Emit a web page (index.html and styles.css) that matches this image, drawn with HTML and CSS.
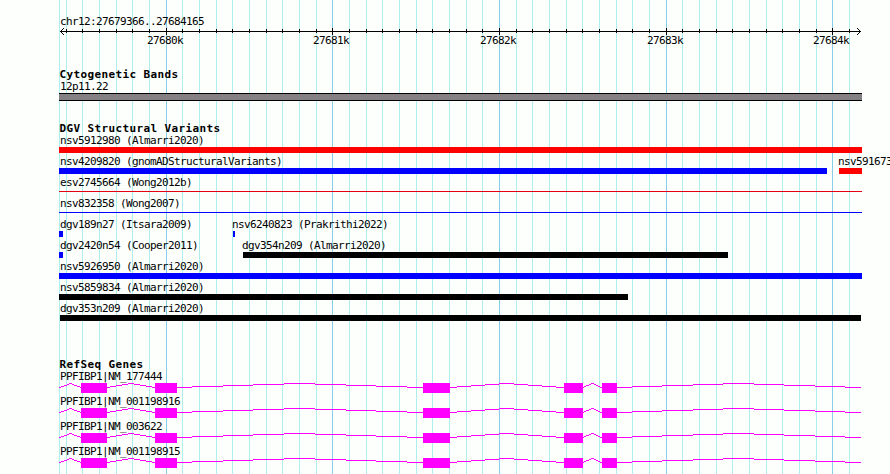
FILE: index.html
```html
<!doctype html>
<html lang="en">
  <head>
    <meta charset="utf-8">
    <meta name="viewport" content="width=device-width, initial-scale=1.0">
    <title>chr12:27679366..27684165</title>
    <link rel="stylesheet" href="styles.css">
  </head>
  <body>
    <main class="browser">

      <header>
        <div class="label">chr12:27679366..27684165</div>
        <svg class="ruler" width="803" height="41" shape-rendering="crispEdges">
          <defs>
            <!-- 300bp = 50px, so three ticks per tile -->
            <pattern id="ticks" x="7" y="2" width="50" height="4" patternUnits="userSpaceOnUse">
              <path d="M0 0h1v4h-1zM16 0h1v4h-1zM33 0h1v4h-1z"/>
            </pattern>
          </defs>
          <rect x="1" y="4" width="801" height="1"/>
          <rect x="7" y="2" width="784" height="4" fill="url(#ticks)"/>
          <path d="M107 1h1v7h-1zM273 1h1v7h-1zM440 1h1v7h-1zM607 1h1v7h-1zM773 1h1v7h-1z"/>
          <path d="M2 3h1v3h-1zM3 2h1v1h-1zM3 6h1v1h-1zM4 1h1v1h-1zM4 7h1v1h-1z"/>
          <path d="M800 3h1v3h-1zM799 2h1v1h-1zM799 6h1v1h-1zM798 1h1v1h-1zM798 7h1v1h-1z"/>
          <g class="ruler-text">
            <text x="106" y="17">27680k</text>
            <text x="272" y="17">27681k</text>
            <text x="439" y="17">27682k</text>
            <text x="606" y="17">27683k</text>
            <text x="772" y="17">27684k</text>
          </g>
        </svg>
      </header>

      <section class="track cytoband">
        <h2>Cytogenetic Bands</h2>
        <div class="label">12p11.22</div>
        <div class="band"></div>
      </section>

      <section class="track variants">
        <h2>DGV Structural Variants</h2>
        <div class="row">
          <div class="variant red" style="width: 803px">
            <div class="label">nsv5912980 (Almarri2020)</div>
            <div class="bar"></div>
          </div>
        </div>
        <div class="row">
          <div class="variant blue" style="width: 768px">
            <div class="label">nsv4209820 (gnomADStructuralVariants)</div>
            <div class="bar"></div>
          </div>
          <div class="variant red inside" style="width: 23px; margin-left: 12px">
            <div class="label">nsv591673</div>
            <div class="bar"></div>
          </div>
        </div>
        <div class="row">
          <div class="variant red" style="width: 803px">
            <div class="label">esv2745664 (Wong2012b)</div>
            <div class="bar thin"></div>
          </div>
        </div>
        <div class="row">
          <div class="variant blue" style="width: 803px">
            <div class="label">nsv832358 (Wong2007)</div>
            <div class="bar thin"></div>
          </div>
        </div>
        <div class="row">
          <div class="variant blue" style="width: 4px">
            <div class="label">dgv189n27 (Itsara2009)</div>
            <div class="bar"></div>
          </div>
          <div class="variant blue inside" style="width: 2px; margin-left: 170px">
            <div class="label">nsv6240823 (Prakrithi2022)</div>
            <div class="bar"></div>
          </div>
        </div>
        <div class="row">
          <div class="variant blue" style="width: 4px">
            <div class="label">dgv2420n54 (Cooper2011)</div>
            <div class="bar"></div>
          </div>
          <div class="variant inside" style="width: 485px; margin-left: 180px">
            <div class="label">dgv354n209 (Almarri2020)</div>
            <div class="bar"></div>
          </div>
        </div>
        <div class="row">
          <div class="variant blue" style="width: 803px">
            <div class="label">nsv5926950 (Almarri2020)</div>
            <div class="bar"></div>
          </div>
        </div>
        <div class="row">
          <div class="variant" style="width: 569px">
            <div class="label">nsv5859834 (Almarri2020)</div>
            <div class="bar"></div>
          </div>
        </div>
        <div class="row">
          <div class="variant inside-edge" style="width: 801px; margin-left: 1px">
            <div class="label">dgv353n209 (Almarri2020)</div>
            <div class="bar"></div>
          </div>
        </div>
      </section>

      <section class="track genes">
        <h2>RefSeq Genes</h2>
        <div class="gene">
          <div class="label">PPFIBP1|NM_177444</div>
          <svg width="803" height="10" shape-rendering="crispEdges">
            <!-- exons and introns, all the transcripts share these -->
            <g id="transcript">
              <path class="intron" d="M0 4.5h2m0-1h3m0-1h3m0-1h2m0-1h3m0 1h2m0 1h3m0 1h3m0 1h1"/>
              <path class="intron" d="M48 4.5h3m0-1h6m0-1h6m0-1h6m0-1h6m0 1h6m0 1h6m0 1h6m0 1h3"/>
              <path class="intron" d="M118 4.5h15m0-1h31m0-1h30m0-1h31m0-1h31m0 1h31m0 1h30m0 1h31m0 1h16"/>
              <path class="intron" d="M391 4.5h7m0-1h14m0-1h14m0-1h14m0-1h15m0 1h14m0 1h14m0 1h14m0 1h8"/>
              <path class="intron" d="M524 4.5h1m0-1h2m0-1h3m0-1h2m0-1h3m0 1h2m0 1h2m0 1h2m0 1h2"/>
              <path class="intron" d="M558 4.5h15m0-1h30m0-1h31m0-1h30m0-1h31m0 1h30m0 1h31m0 1h30m0 1h16"/>
              <path class="exon" d="M22 0h26v10h-26zM96 0h22v10h-22zM364 0h27v10h-27zM505 0h19v10h-19zM543 0h15v10h-15z"/>
            </g>
          </svg>
        </div>
        <div class="gene">
          <div class="label">PPFIBP1|NM_001198916</div>
          <svg width="803" height="10" shape-rendering="crispEdges"><use href="#transcript"/></svg>
        </div>
        <div class="gene">
          <div class="label">PPFIBP1|NM_003622</div>
          <svg width="803" height="10" shape-rendering="crispEdges"><use href="#transcript"/></svg>
        </div>
        <div class="gene">
          <div class="label">PPFIBP1|NM_001198915</div>
          <svg width="803" height="10" shape-rendering="crispEdges"><use href="#transcript"/></svg>
        </div>
      </section>

    </main>
  </body>
</html>
```
FILE: styles.css
```css
body {
  margin: 0;
  background-color: #fdfffc;
  color: black;
  font-family: "DejaVu Sans Mono", monospace;
  font-size: 11px;
  line-height: 14px;
  letter-spacing: -0.62px;
  overflow: hidden;
}

svg {
  display: block;
}

/* vertical grid lines: major ones first, then the minor ones */
.browser {
  box-sizing: border-box;
  width: 803px;
  height: 474px;
  margin-left: 59px;
  padding-top: 15px;
  background-image:
    linear-gradient(#87ceeb, #87ceeb),
    linear-gradient(#87ceeb, #87ceeb),
    linear-gradient(#87ceeb, #87ceeb),
    linear-gradient(#87ceeb, #87ceeb),
    linear-gradient(#87ceeb, #87ceeb),
    linear-gradient(#afeeee, #afeeee),
    linear-gradient(to right, #afeeee 1px, transparent 1px, transparent 16px, #afeeee 16px, #afeeee 17px, transparent 17px, transparent 33px, #afeeee 33px, #afeeee 34px, transparent 34px);
  background-size: 1px 100%, 1px 100%, 1px 100%, 1px 100%, 1px 100%, 1px 100%, 50px 100%;
  background-position: 107px 0, 273px 0, 440px 0, 607px 0, 773px 0, 0 0, 7px 0;
  background-repeat: no-repeat, no-repeat, no-repeat, no-repeat, no-repeat, no-repeat, repeat-x;
}

h2 {
  height: 12px;
  margin: 0;
  padding-left: 0.5px;
  font-size: 11px;
  letter-spacing: 0.38px;
  white-space: nowrap;
}

.label {
  height: 12px;
  margin-bottom: 1px;
  padding-left: 1px;
  white-space: nowrap;
}

header .label {
  margin-bottom: 0;
}

.ruler-text {
  text-anchor: middle;
}

.cytoband {
  margin-bottom: 21px;
}

.band {
  height: 6px;
  border-top: 1px solid black;
  border-bottom: 1px solid black;
  background-color: #848084;
}

.variants {
  margin-bottom: 37px;
}

.row {
  display: flex;
  height: 21px;
}

.variants .row:last-child {
  height: 19px;
}

.variant {
  flex: none;
}

.inside .label {
  margin-left: -1px;
  padding-left: 0;
}

.inside-edge .label {
  padding-left: 0;
}

.bar {
  height: 6px;
  background-color: black;
}

.bar.thin {
  height: 1px;
  margin-top: 4px;
}

.label + .bar.thin {
  margin-top: 3px;
}

.red .bar {
  background-color: #ff0000;
}

.red .bar.thin {
  background-color: #e60014;
}

.blue .bar {
  background-color: #0000ff;
}

.gene {
  height: 25px;
}

.intron {
  fill: none;
  stroke: magenta;
}

.exon {
  fill: magenta;
}
```
